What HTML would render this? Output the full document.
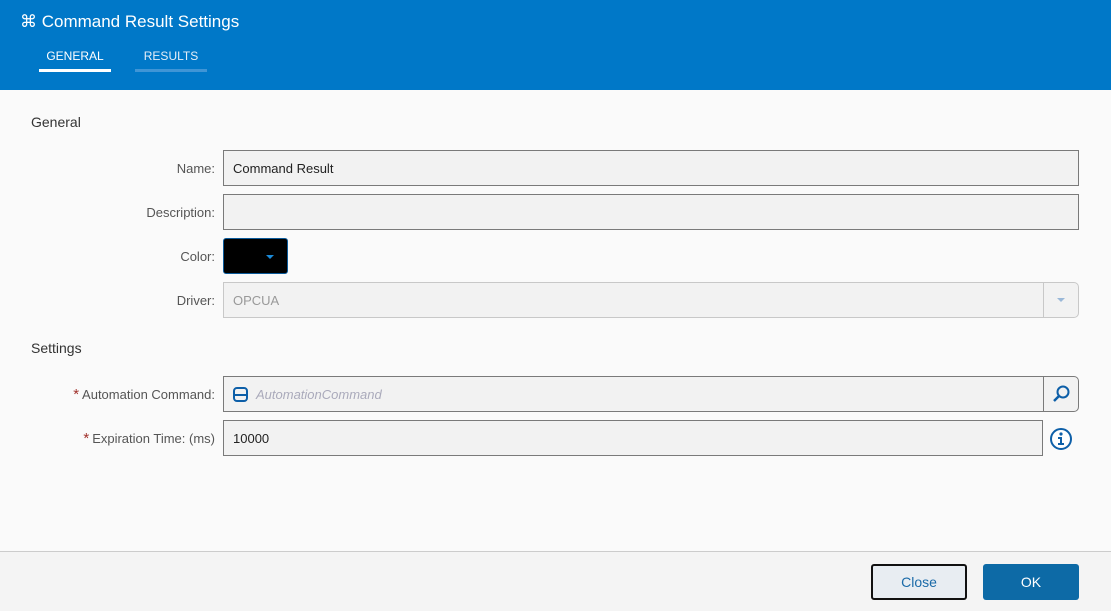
<!DOCTYPE html>
<html><head><style>
*{box-sizing:border-box;margin:0;padding:0}
body{width:1111px;height:611px;overflow:hidden;background:#fafafa;font-family:"Liberation Sans",sans-serif;position:relative}
.hdr{position:absolute;left:0;top:0;width:1111px;height:90px;background:#0078c8;color:#fff}
.title{position:absolute;left:20px;top:12px;font-size:17px}
.tab{position:absolute;top:49px;font-size:12px;text-align:center}
.lbl{position:absolute;right:896px;font-size:13px;color:#555;text-align:right}
.sec{position:absolute;left:31px;font-size:14px;color:#333}
.inp{position:absolute;left:223px;height:36px;border:1px solid #7a7a7a;background:#f2f2f2;font-size:13px;color:#222;padding:10px 9px}
.star{color:#a0302a;margin-right:3px;font-size:15px}
.foot{position:absolute;left:0;top:551px;width:1111px;height:60px;background:#f4f4f4;border-top:1px solid #ccc}
.btn{position:absolute;top:564px;width:96px;height:36px;font-size:14px;text-align:center;line-height:36px;border-radius:3px}
</style></head><body>
<div class="hdr">
<div class="title">⌘ Command Result Settings</div>
<div class="tab" style="left:39px;width:72px">GENERAL</div>
<div style="position:absolute;left:39px;top:69px;width:72px;height:3px;background:#fff"></div>
<div class="tab" style="left:135px;width:72px;color:#e6eef7">RESULTS</div>
<div style="position:absolute;left:135px;top:69px;width:72px;height:3px;background:#3f95d6"></div>
</div>
<div class="sec" style="top:114px">General</div>
<div class="lbl" style="top:161px">Name:</div>
<div class="inp" style="top:150px;width:856px">Command Result</div>
<div class="lbl" style="top:205px">Description:</div>
<div class="inp" style="top:194px;width:856px"></div>
<div class="lbl" style="top:249px">Color:</div>
<div style="position:absolute;left:223px;top:238px;width:65px;height:36px;background:#000;border:1px solid #0a5a9a;border-radius:3px"><div style="position:absolute;left:42px;top:16px;border-left:4px solid transparent;border-right:4px solid transparent;border-top:4px solid #1a8ad8"></div></div>
<div class="lbl" style="top:293px">Driver:</div>
<div class="inp" style="top:282px;width:856px;border-color:#c8c8c8;color:#999;border-radius:0 5px 5px 0">OPCUA<div style="position:absolute;right:0;top:0;width:35px;height:34px;border-left:1px solid #c8c8c8"><div style="position:absolute;left:13px;top:15px;border-left:4px solid transparent;border-right:4px solid transparent;border-top:4px solid #9ab8d8"></div></div></div>
<div class="sec" style="top:340px">Settings</div>
<div class="lbl" style="top:386px"><span class="star">*</span>Automation Command:</div>
<div class="inp" style="top:376px;width:856px;border-radius:0 5px 5px 0;padding-left:32px;color:#aab;font-style:italic">AutomationCommand
<div style="position:absolute;left:9px;top:10px;width:15px;height:15px;border:2px solid #0d5fa8;border-radius:4px"><div style="position:absolute;left:0;top:4.5px;width:11px;height:2px;background:#0d5fa8"></div></div>
<div style="position:absolute;right:0;top:0;width:35px;height:34px;border-left:1px solid #7a7a7a"><svg width="35" height="34"><circle cx="19" cy="15" r="5.5" fill="none" stroke="#0d5fa8" stroke-width="2"/><line x1="15" y1="19" x2="10" y2="24" stroke="#0d5fa8" stroke-width="2.5"/></svg></div></div>
<div class="lbl" style="top:430px"><span class="star">*</span>Expiration Time: (ms)</div>
<div class="inp" style="top:420px;width:820px">10000</div>
<svg style="position:absolute;left:1049px;top:427px" width="24" height="24"><circle cx="12" cy="12" r="10" fill="#fff" stroke="#0d5fa8" stroke-width="2"/><circle cx="12" cy="7" r="1.6" fill="#0d5fa8"/><path d="M9 10h4v6h2v2H9v-2h2v-4H9z" fill="#0d5fa8"/></svg>
<div class="foot"></div>
<div class="btn" style="left:871px;background:#e8edf2;border:2px solid #111;color:#1a6aa8;line-height:32px">Close</div>
<div class="btn" style="left:983px;background:#0d6aa6;color:#fff">OK</div>
</body></html>
